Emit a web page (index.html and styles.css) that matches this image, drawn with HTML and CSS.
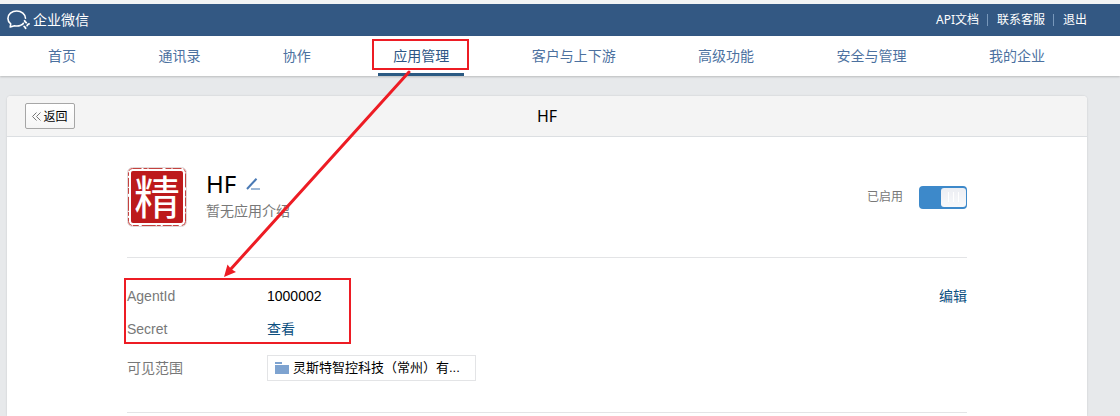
FILE: index.html
```
<!DOCTYPE html>
<html lang="zh-CN">
<head>
    <meta charset="UTF-8">
    <meta name="viewport" content="width=device-width, initial-scale=1.0">
    <title>企业微信</title>
    <link rel="stylesheet" href="styles.css">
</head>
<body>
    <header class="topbar">
        <a class="brand" href="#">
            <svg class="brand-icon" width="24" height="20" viewBox="0 0 24 20" fill="none" stroke="#fff" stroke-width="1.6" stroke-linejoin="round" stroke-linecap="round">
                <path d="M13.200 15.500Q10.500 16.400 7.500 15.700L3.200 17L3.700 13.800C1.900 12.400 .9 10.600 .9 8.500C.9 4.300 4.800 1 9.700 1C14.500 1 18.400 4.200 18.500 8.300"/>
                <path d="M17.600 10.800Q18 12 19.200 12.600M22 13.900Q20.700 14.200 20.200 15.500M18.600 18.300Q18.300 17 17.200 16.500M14.300 14.900Q15.700 14.700 16.200 13.500" stroke-width="1.900"/>
            </svg>
            <span>企业微信</span>
        </a>
        <div class="topbar-links">
            <a href="#">API文档</a>
            <a href="#">联系客服</a>
            <a href="#">退出</a>
        </div>
    </header>

    <nav class="nav">
        <a href="#">首页</a>
        <a href="#">通讯录</a>
        <a href="#">协作</a>
        <a href="#" class="active">应用管理</a>
        <a href="#">客户与上下游</a>
        <a href="#">高级功能</a>
        <a href="#">安全与管理</a>
        <a href="#">我的企业</a>
    </nav>

    <main class="panel">
        <div class="panel-header">
            <button type="button" class="back">
                <svg width="9" height="9" viewBox="0 0 9 9" fill="none" stroke="#777"><path d="M4.500 .5l-4 4 4 4M8.500 .5l-4 4 4 4"/></svg>
                返回
            </button>
            <h1>HF</h1>
        </div>

        <section class="section app">
            <svg class="app-logo" width="60" height="60" viewBox="0 0 60 60" role="img" aria-label="精">
                <rect x=".5" y=".5" width="59" height="59" rx="5" fill="#fff" stroke="#e2dada"/>
                <rect x="1.500" y="1.500" width="57" height="57" rx="4" fill="none" stroke="#c4423f" stroke-dasharray="9 2 4 1 14 3 6 1"/>
                <rect x="4" y="4" width="52" height="52" rx="2" fill="#bd1a1c"/>
                <text class="seal" x="30" y="47" text-anchor="middle">精</text>
            </svg>
            <div class="app-info">
                <h2>HF
                    <svg width="14" height="12" viewBox="0 0 14 12" fill="none" stroke-width="2"><path d="M5 11h9" stroke="#9db8d6"/><path d="M1 11L10.500 .8" stroke="#4a7ab5"/></svg>
                </h2>
                <p>暂无应用介绍</p>
            </div>
            <label class="status">已启用 <input type="checkbox" class="switch" checked></label>
        </section>

        <section class="section details">
            <dl>
                <div class="row"><dt>AgentId</dt><dd>1000002</dd></div>
                <div class="row"><dt>Secret</dt><dd><a href="#">查看</a></dd></div>
                <div class="row scope">
                    <dt>可见范围</dt>
                    <dd class="party">
                        <svg width="14" height="12" viewBox="0 0 14 12" fill="#7ea3d0"><path d="M0 0h7v2H0zM0 3h14v9H0z"/></svg>
                        <span>灵斯特智控科技（常州）有...</span>
                    </dd>
                </div>
            </dl>
            <a class="edit" href="#">编辑</a>
        </section>
    </main>

    <svg class="marks" width="480" height="346" viewBox="0 0 480 346" fill="none" stroke="#ed1c24" stroke-width="2">
        <rect x="373" y="40" width="95" height="29"/>
        <rect x="125" y="279" width="225" height="64"/>
        <path d="M409 72L230 270" stroke-width="3" stroke-linecap="round"/>
        <path d="M224 277l3.500-12.500 3.500 4.500 5 3z" fill="#ed1c24" stroke="none"/>
    </svg>
</body>
</html>
```
FILE: styles.css
```
* {
    box-sizing: border-box;
}
body {
    display: flex;
    flex-direction: column;
    min-height: 100vh;
    margin: 0;
    border-top: 4px solid #f2f4f5;
    background-color: #e7e9eb;
    font-family: "Noto Sans", "Noto Sans CJK SC", sans-serif;
    font-size: 14px;
    line-height: 20px;
    color: #000;
}
a {
    color: #0c4f7f;
    text-decoration: none;
}
h1, h2, p, dl, dd {
    margin: 0;
    font-weight: 400;
}
.topbar {
    display: flex;
    align-items: center;
    justify-content: space-between;
    height: 32px;
    padding: 0 33px 0 7px;
    background-color: #335883;
}
.topbar a {
    color: #fff;
}
.brand {
    display: flex;
    align-items: center;
    gap: 2px;
}
.topbar-links {
    display: flex;
    font-size: 12px;
    line-height: 12px;
}
.topbar-links a + a {
    margin-left: 8px;
    padding-left: 9px;
    border-left: 1px solid #7898bb;
}
.nav {
    display: flex;
    justify-content: space-between;
    height: 40px;
    padding: 0 60px 0 33px;
    background-color: #fff;
    box-shadow: 0 1px 2px rgba(0,0,0,0.2);
}
.nav a {
    padding: 0 15px;
    line-height: 40px;
    color: #4c719f;
}
.nav .active {
    color: #2c5685;
    border-bottom: 3px solid #2b5a83;
}
.panel {
    flex: 1;
    margin: 20px 33px 0 7px;
    border-radius: 4px 4px 0 0;
    background-color: #fff;
    box-shadow: 0 0 2px rgba(0,0,0,0.15);
}
.panel-header {
    display: grid;
    grid-template-columns: 1fr auto 1fr;
    align-items: center;
    height: 41px;
    padding: 0 18px;
    border-bottom: 1px solid #dcdfe2;
    border-radius: 4px 4px 0 0;
    background-color: #f4f4f4;
}
.panel-header h1 {
    font-size: 16px;
}
.back {
    display: flex;
    align-items: center;
    justify-content: center;
    justify-self: start;
    gap: 2px;
    width: 50px;
    height: 26px;
    padding: 0;
    border: 1px solid #a6a6a6;
    border-radius: 2px;
    background: linear-gradient(#fff, #f5f5f5);
    font-family: inherit;
    font-size: 12px;
    color: #000;
}
.section {
    display: flex;
    margin: 0 120px;
    border-bottom: 1px solid #e3e4e6;
}
.app {
    padding: 30px 0;
    gap: 19px;
}
.app-logo {
    overflow: visible;
}
.seal {
    font-family: "Noto Sans CJK SC", sans-serif;
    font-size: 46px;
    font-weight: 400;
    fill: #fff;
}
.app-info {
    flex: 1;
}
.app-info h2 {
    display: flex;
    align-items: center;
    gap: 10px;
    font-size: 24px;
    line-height: 34px;
}
.app-info p {
    color: #787878;
}
.status {
    display: flex;
    align-items: center;
    gap: 16px;
    font-size: 12px;
    color: #787878;
}
.switch {
    appearance: none;
    display: flex;
    width: 48px;
    height: 23px;
    margin: 0;
    padding: 2px 1px;
    border-radius: 4px;
    background-color: #aaa;
}
.switch:checked {
    justify-content: flex-end;
    background-color: #3d89ca;
}
.switch::before {
    content: "";
    width: 25px;
    border-radius: 3px;
    background: repeating-linear-gradient(90deg, #fff 0 1px, transparent 1px 5px) center / 11px 10px no-repeat, linear-gradient(#eceef3, #f8f9fb);
}
.details {
    justify-content: space-between;
    padding: 21px 0 31px;
}
.row {
    display: flex;
    align-items: center;
    min-height: 33px;
    font-family: "Liberation Sans", "Noto Sans CJK SC", sans-serif;
}
.row dt {
    width: 140px;
    color: #787878;
}
.scope {
    min-height: 26px;
    margin-top: 10px;
}
.party {
    display: flex;
    align-items: center;
    gap: 4px;
    width: 209px;
    height: 26px;
    padding: 0 7px;
    border: 1px solid #e3e4e6;
    font-size: 13px;
    white-space: nowrap;
}
.edit {
    line-height: 33px;
}
.marks {
    position: absolute;
    top: 0;
    left: 0;
    pointer-events: none;
}
```
